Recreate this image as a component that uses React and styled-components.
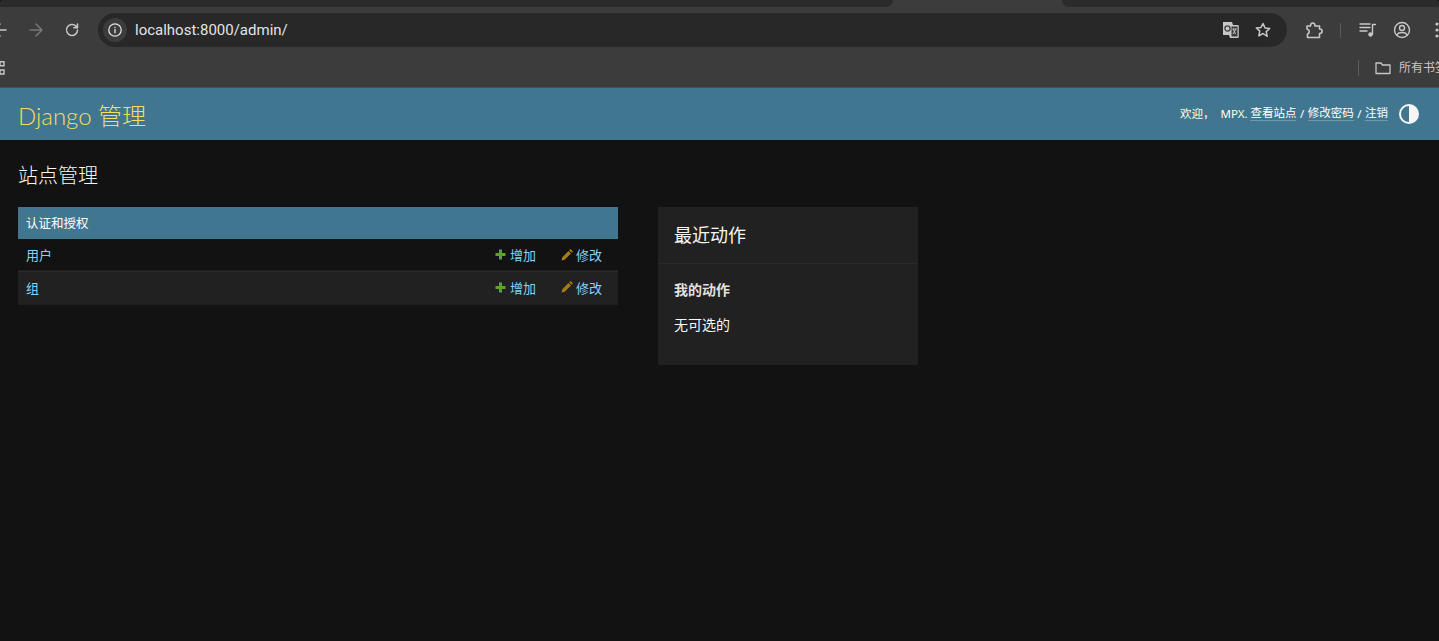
import React from 'react'
import styled, { createGlobalStyle } from 'styled-components'

const CJK = `"Noto Sans", "Noto Sans CJK SC", sans-serif`

const GlobalStyle = createGlobalStyle`
  html, body {
    margin: 0;
    padding: 0;
    height: 100%;
    background: #121212;
    font-family: ${CJK};
  }
  * { box-sizing: border-box; }
`

const Page = styled.div`
  height: 641px;
  overflow: hidden;
  display: flex;
  flex-direction: column;
  background: #121212;
`

const Browser = styled.div`
  height: 88px;
  flex: none;
  background: #3c3c3c;
  border-bottom: 1px solid #4a4d50;
  border-radius: 4px 4px 0 0;
  overflow: hidden;
`

const TabStrip = styled.div`
  height: 7px;
  display: flex;
`

const Tab = styled.div`
  flex: none;
  width: ${p => p.$w}px;
  background: ${p => (p.$active ? '#3c3c3c' : '#2b2b2b')};
  border-radius: ${p => p.$r};
`

const Toolbar = styled.div`
  height: 46px;
  padding-top: 6px;
  display: flex;
  align-items: flex-start;
`

const NavIcons = styled.div`
  width: 96px;
  flex: none;
  height: 34px;
  display: flex;
  align-items: center;
  margin-left: -8px;
  gap: 20px;
`

const Icon = styled.svg`
  flex: none;
  display: block;
  fill: none;
  stroke: ${p => p.$c || '#c7c7c7'};
  stroke-width: ${p => p.$sw || 1.5};
  stroke-linecap: round;
  stroke-linejoin: round;
`

const Omnibox = styled.div`
  width: 1189px;
  height: 34px;
  margin-left: 10px;
  flex: none;
  background: #282828;
  border-radius: 17px;
  display: flex;
  align-items: center;
  padding: 0 16px 0 5px;
`

const InfoChip = styled.div`
  width: 24px;
  height: 24px;
  border-radius: 50%;
  background: #3c3c3c;
  display: flex;
  align-items: center;
  justify-content: center;
`

const Url = styled.div`
  margin-left: 8px;
  flex: 1;
  color: #e3e3e3;
  font: 15px/34px Roboto, sans-serif;
`

const OmniActions = styled.div`
  display: flex;
  align-items: center;
  gap: 15px;
`

const Extras = styled.div`
  display: flex;
  flex: none;
  align-items: center;
  height: 34px;
  margin-left: 18px;
  gap: 17px;
`

const Dots = styled.svg`
  display: block;
  flex: none;
  margin-left: 7px;
`

const Sep = styled.div`
  flex: none;
  width: 1px;
  height: ${p => p.$h || 16}px;
  background: #5c5c5c;
`

const Bookmarks = styled.div`
  height: 29px;
  display: flex;
  align-items: center;
  justify-content: space-between;
`

const BookmarkRight = styled.div`
  display: flex;
  flex: none;
  align-items: center;
  gap: 8px;
  width: 81px;
  white-space: nowrap;
  color: #c7c7c7;
  font-size: 12px;
`

const BookmarkLabel = styled.span`
  margin-bottom: 2px;
`

const BookmarkSep = styled(Sep)`
  margin-right: 8px;
`

const Header = styled.header`
  height: 52px;
  flex: none;
  background: #417690;
  display: flex;
  align-items: center;
  justify-content: space-between;
  padding: 0 20px 0 18px;
`

const Branding = styled.h1`
  margin: 0;
  font-family: Lato, "Noto Sans CJK SC", sans-serif;
  font-size: 24px;
  font-weight: 300;
  color: #f5dd5d;
`

const UserTools = styled.div`
  display: flex;
  align-items: center;
  font-size: 11.5px;
  color: #fff;
`

const ToolText = styled.div`
  display: flex;
  align-items: center;
  margin-bottom: 2px;
`

const Welcome = styled.span`
  color: #ffffe0;
  white-space: pre;
`

const ToolLink = styled.a`
  color: #fff;
  border-bottom: 1px solid rgba(255, 255, 255, 0.25);
  line-height: 14px;
`

const Slash = styled.span`
  white-space: pre;
  padding: 0 0.5px;
`

const ThemeButton = styled.svg`
  display: block;
  margin-left: 11px;
`

const Content = styled.main`
  flex: 1;
  padding: 21px 18px;
  color: #eeeeee;
`

const Title = styled.h2`
  margin: 0 0 16px;
  font-size: 20px;
  line-height: 30px;
  font-weight: 300;
  color: #f7f7f7;
`

const Columns = styled.div`
  display: flex;
  align-items: flex-start;
  gap: 40px;
`

const Module = styled.section`
  width: 600px;
`

const Caption = styled.div`
  height: 32px;
  background: #417690;
  color: #fff;
  font-size: 12.5px;
  line-height: 34px;
  padding-left: 8px;
`

const Row = styled.div`
  height: ${p => p.$h}px;
  display: flex;
  align-items: center;
  padding: 0 0 ${p => (p.$alt ? 2 : 0)}px 8px;
  font-size: 13px;
  background: ${p => (p.$alt ? '#212121' : 'transparent')};
  border-bottom: 1px solid #1f1f1f;
  border-top: ${p => (p.$alt ? '1px solid #2a2a2a' : 'none')};
`

const RowName = styled.a`
  flex: 1;
  color: #81d4fa;
`

const Action = styled.a`
  display: flex;
  align-items: center;
  gap: ${p => p.$gap}px;
  color: #81d4fa;
  width: ${p => p.$w}px;
`

const Recent = styled.aside`
  width: 260px;
  height: 158px;
  background: #212121;
`

const RecentTitle = styled.h2`
  margin: 0;
  height: 57px;
  padding: 0 16px;
  font-size: 18px;
  line-height: 57px;
  font-weight: 400;
  color: #f7f7f7;
  border-bottom: 1px solid #2a2a2a;
`

const RecentSub = styled.h3`
  margin: 16px 16px 0;
  font-size: 14px;
  line-height: 20px;
  font-weight: 700;
  color: #e0e0e0;
`

const RecentNote = styled.p`
  margin: 15px 16px 0;
  font-size: 14px;
  line-height: 20px;
  color: #f7f7f7;
`

const PlusIcon = () => (
  <svg width="11" height="11" viewBox="0 0 11 11">
    <path d="M4 0.5h3v3.5h3.5v3H7v3.5H4V7H0.5V4H4z" fill="#5fa225" />
  </svg>
)

const PencilIcon = () => (
  <svg width="12" height="12" viewBox="0 0 12 12">
    <path d="M0.5 11.5l0.8-3.2 6.2-6.2 2.4 2.4-6.2 6.2zM8.2 1.4l0.9-0.9c0.3-0.3 0.7-0.3 1 0l1.4 1.4c0.3 0.3 0.3 0.7 0 1l-0.9 0.9z" fill="#a67d14" />
  </svg>
)

const ModelRow = ({ name, alt, h }) => (
  <Row $alt={alt} $h={h}>
    <RowName>{name}</RowName>
    <Action $w={66} $gap={4}><PlusIcon />增加</Action>
    <Action $w={57} $gap={3}><PencilIcon />修改</Action>
  </Row>
)

const App = () => (
  <Page>
    <GlobalStyle />
    <Browser>
      <TabStrip>
        <Tab $w={893} $r="0 0 8px 0" />
        <Tab $w={169} $active />
        <Tab $w={377} $r="0 0 0 8px" />
      </TabStrip>
      <Toolbar>
        <NavIcons>
          <Icon width="16" height="16" viewBox="0 0 16 16"><path d="M14 8H2M8 2L2 8l6 6" /></Icon>
          <Icon width="16" height="16" viewBox="0 0 16 16" $c="#777"><path d="M2 8h12M8 2l6 6-6 6" /></Icon>
          <Icon width="16" height="16" viewBox="0 0 16 16"><path d="M13.5 8a5.5 5.5 0 1 1-1.6-3.9L13.5 5.7M13.5 2v3.7H9.8" /></Icon>
        </NavIcons>
        <Omnibox>
          <InfoChip>
            <Icon width="14" height="14" viewBox="0 0 14 14" $c="#e3e3e3" $sw={1.3}>
              <circle cx="7" cy="7" r="6.2" />
              <path d="M7 6.4v3.4M7 4.2v.3" />
            </Icon>
          </InfoChip>
          <Url>localhost:8000/admin/</Url>
          <OmniActions>
            <svg width="18" height="18" viewBox="0 0 18 18">
              <path d="M1 1h9l1 3h5.5v13H8l-1-3H1z" fill="#c7c7c7" />
              <path d="M9 5h7v11H9z" fill="#3c3c3c" stroke="#c7c7c7" />
              <path d="M10.5 8h4M11 8l2.5 5M14 8l-3 5" stroke="#c7c7c7" fill="none" />
              <circle cx="5.5" cy="7.5" r="2.6" fill="none" stroke="#3c3c3c" strokeWidth="1.3" />
            </svg>
            <Icon width="16" height="16" viewBox="0 0 16 16" $sw={1.5}>
              <path d="M8 1.5l2 4.4 4.7.5-3.5 3.2 1 4.7L8 11.5l-4.2 2.3 1-4.7-3.5-3.2 4.7-.5z" />
            </Icon>
          </OmniActions>
        </Omnibox>
        <Extras>
          <Icon width="18" height="18" viewBox="0 0 18 18" $sw={1.6}>
            <path d="M2 5h3.5C5.5 1 10 1 10 5h4.5v3c3.5 0 3.5 4.5 0 4.5v4h-12V13c2.500-1 2.500-4-.5-5z" />
          </Icon>
          <Sep $h={15} />
          <Icon width="18" height="18" viewBox="0 0 18 18" $sw={1.4}>
            <path d="M2 3h10M2 6.500h10M2 10h7M14.500 13V3.500h3" />
            <circle cx="12.500" cy="13.500" r="2.200" fill="#c7c7c7" stroke="none" />
          </Icon>
          <Icon width="18" height="18" viewBox="0 0 18 18" $sw={1.4}>
            <circle cx="9" cy="9" r="7.500" />
            <circle cx="9" cy="7" r="2.500" />
            <path d="M4 14c1-3.400 9-3.400 10 0" />
          </Icon>
          <Dots width="4" height="16" viewBox="0 0 4 16">
            <circle cx="2" cy="2" r="1.600" fill="#c7c7c7" />
            <circle cx="2" cy="8" r="1.600" fill="#c7c7c7" />
            <circle cx="2" cy="14" r="1.600" fill="#c7c7c7" />
          </Dots>
        </Extras>
      </Toolbar>
      <Bookmarks>
        <svg width="5" height="14" viewBox="0 0 5 14">
          <path d="M0 .7h4v4H0zM0 9h4v4H0z" fill="none" stroke="#c7c7c7" strokeWidth="1.4" />
        </svg>
        <BookmarkRight>
          <BookmarkSep $h={16} />
          <Icon width="16" height="16" viewBox="0 0 16 16" $sw={1.3}>
            <path d="M1 3h5l1.500 2H15v8.500H1z" />
          </Icon>
          <BookmarkLabel>所有书签</BookmarkLabel>
        </BookmarkRight>
      </Bookmarks>
    </Browser>
    <Header>
      <Branding>Django 管理</Branding>
      <UserTools>
        <ToolText>
          <Welcome>欢迎，  MPX. </Welcome>
          <ToolLink>查看站点</ToolLink>
          <Slash> / </Slash>
          <ToolLink>修改密码</ToolLink>
          <Slash> / </Slash>
          <ToolLink>注销</ToolLink>
        </ToolText>
        <ThemeButton width="20" height="20" viewBox="0 0 20 20">
          <circle cx="10" cy="10" r="9" fill="none" stroke="#f5f5f5" strokeWidth="2" />
          <path d="M10 1a9 9 0 0 1 0 18z" fill="#f5f5f5" />
        </ThemeButton>
      </UserTools>
    </Header>
    <Content>
      <Title>站点管理</Title>
      <Columns>
        <Module>
          <Caption>认证和授权</Caption>
          <ModelRow name="用户" h={32} />
          <ModelRow name="组" alt h={34} />
        </Module>
        <Recent>
          <RecentTitle>最近动作</RecentTitle>
          <RecentSub>我的动作</RecentSub>
          <RecentNote>无可选的</RecentNote>
        </Recent>
      </Columns>
    </Content>
  </Page>
)

export default App
